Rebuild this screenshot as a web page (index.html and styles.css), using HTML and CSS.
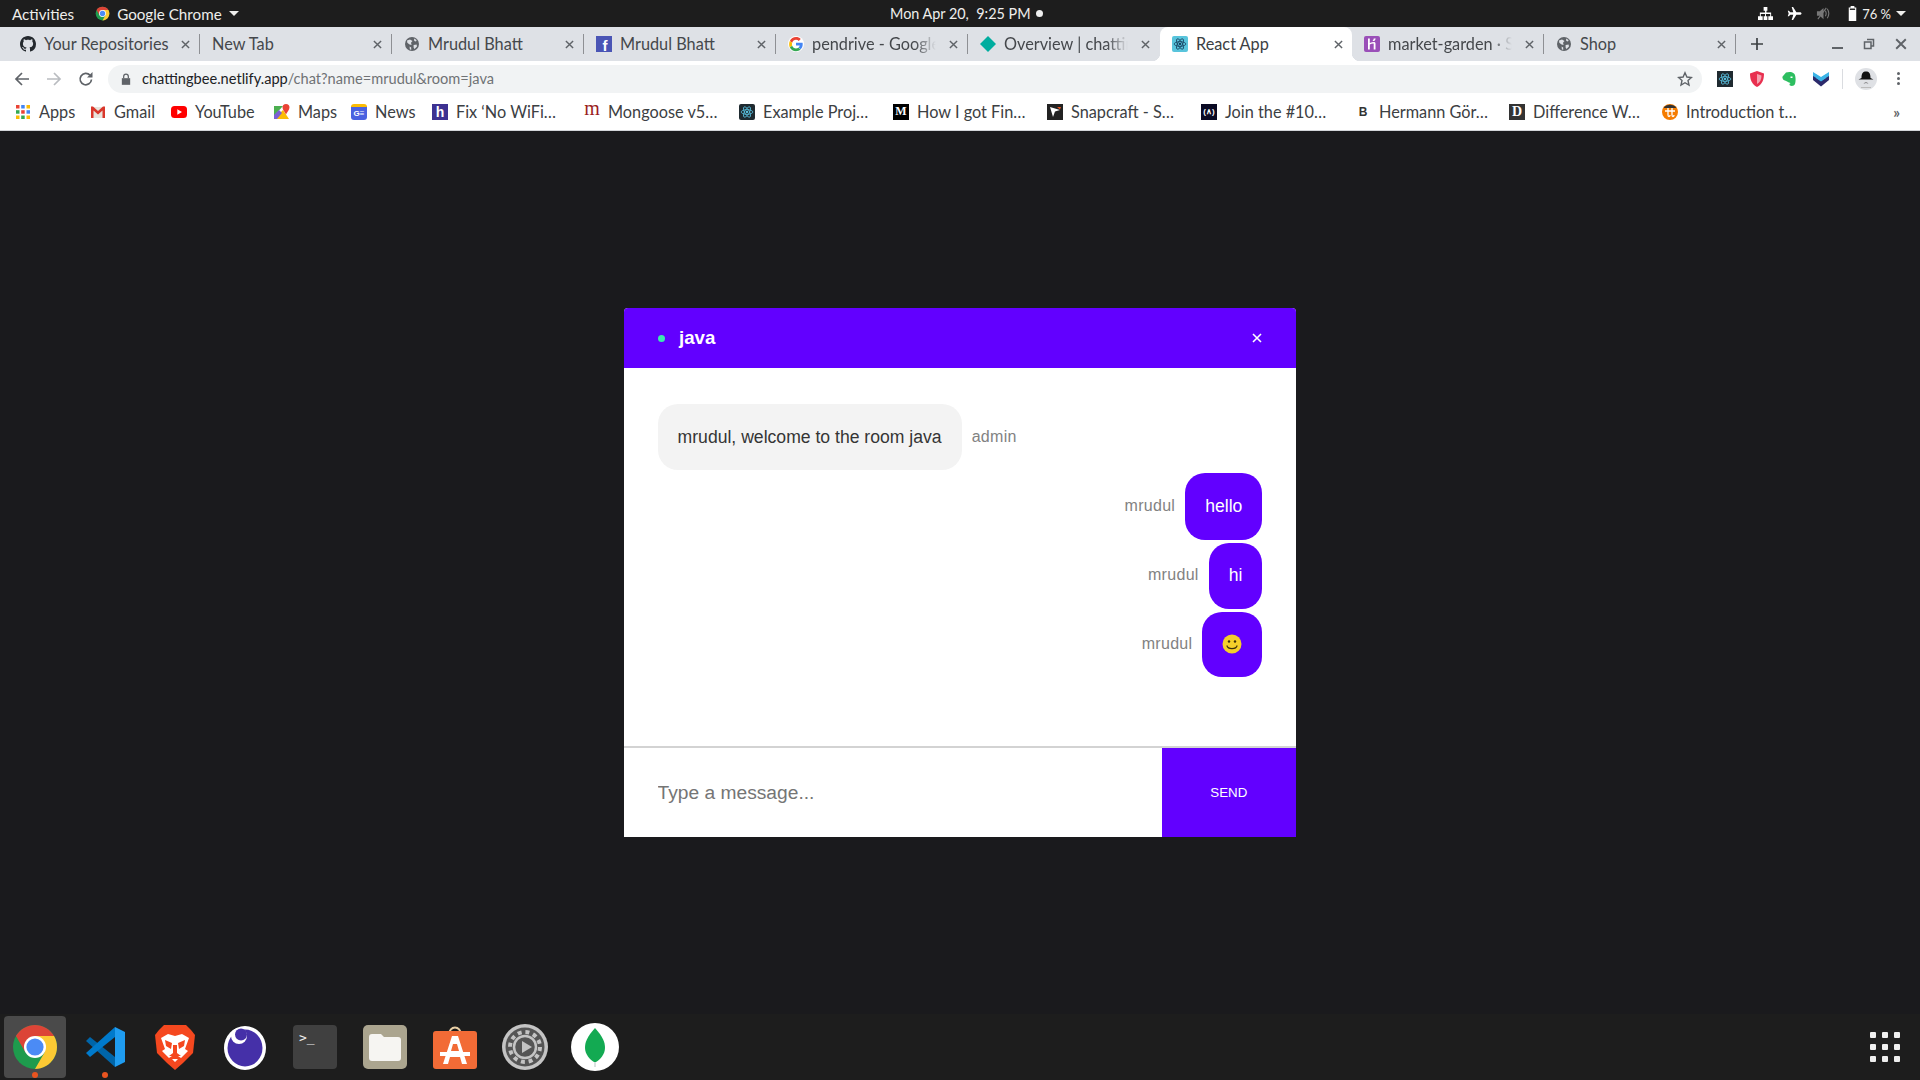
FILE: index.html
```html
<!DOCTYPE html>
<html lang="en">
<head>
<meta charset="utf-8">
<title>React App</title>
<link rel="stylesheet" href="styles.css">
</head>
<body>
<svg class="sprite" xmlns="http://www.w3.org/2000/svg">
  <symbol id="chrome" viewBox="0 0 48 48">
    <circle cx="24" cy="24" r="22" fill="#1e9b4d"/>
    <path d="M4.95 13A22 22 0 0 1 43.05 13H24L14.47 29.5Z" fill="#dc4437"/>
    <path d="M43.05 13A22 22 0 0 1 24 46L33.53 29.5 24 13Z" fill="#fcc934"/>
    <circle cx="24" cy="24" r="11" fill="#fff"/>
    <circle cx="24" cy="24" r="8.6" fill="#4b8bf5"/>
  </symbol>
  <symbol id="github" viewBox="0 0 16 16">
    <path fill="#24292e" d="M8 0C3.58 0 0 3.58 0 8c0 3.54 2.29 6.53 5.47 7.59.4.07.55-.17.55-.38 0-.19-.01-.82-.01-1.49-2.01.37-2.53-.49-2.69-.94-.09-.23-.48-.94-.82-1.13-.28-.15-.68-.52-.01-.53.63-.01 1.08.58 1.23.82.72 1.21 1.87.87 2.33.66.07-.52.28-.87.51-1.07-1.78-.2-3.64-.89-3.64-3.95 0-.87.31-1.59.82-2.15-.08-.2-.36-1.02.08-2.12 0 0 .67-.21 2.2.82.64-.18 1.32-.27 2-.27.68 0 1.36.09 2 .27 1.53-1.04 2.2-.82 2.2-.82.44 1.1.16 1.92.08 2.12.51.56.82 1.27.82 2.15 0 3.07-1.87 3.75-3.65 3.95.29.25.54.73.54 1.48 0 1.07-.01 1.93-.01 2.2 0 .21.15.46.55.38A8.013 8.013 0 0016 8c0-4.42-3.58-8-8-8z"/>
  </symbol>
  <symbol id="globe" viewBox="0 0 16 16">
    <circle cx="8" cy="8" r="7" fill="#5f6368"/>
    <path fill="#dee1e6" d="M3 4.5 6 3.5 8.5 5 7 6.8 7.6 9 5.6 8.6 3.3 6.8ZM10 2.6 12.6 4 12 5.6 10.3 5ZM9.6 9 12.6 8.6 13 10.6 10.5 13 9.6 11.5ZM5.6 10.5 7.2 11.5 7.2 14 5.8 13.2Z"/>
  </symbol>
  <symbol id="google" viewBox="0 0 48 48">
    <circle cx="24" cy="24" r="24" fill="#fff"/>
    <path fill="#ea4335" d="M24 11.5c3.2 0 6 1.1 8.2 3.2l6-6C34.500 5.300 29.700 3.300 24 3.300 15.900 3.300 8.900 8 5.500 14.800l7 5.400C14.200 15.100 18.700 11.500 24 11.500z"/>
    <path fill="#4285f4" d="M44.100 24.500c0-1.500-.1-2.900-.4-4.200H24v8h11.300c-.5 2.600-2 4.800-4.200 6.300l6.800 5.300c4-3.700 6.200-9.100 6.200-15.400z"/>
    <path fill="#fbbc05" d="M12.500 28.800c-.4-1.300-.7-2.700-.7-4.100s.3-2.800.7-4.100l-7-5.400C4 18 3.300 21.200 3.300 24.700s.7 6.700 2.200 9.500l7-5.400z"/>
    <path fill="#34a853" d="M24 45.700c5.600 0 10.300-1.800 13.900-5.100l-6.800-5.300c-1.900 1.300-4.300 2-7.100 2-5.300 0-9.800-3.600-11.500-8.400l-7 5.400C8.900 41 15.900 45.700 24 45.700z"/>
  </symbol>
  <symbol id="atom" viewBox="0 0 24 24">
    <g fill="none" stroke="currentColor" stroke-width="1.3">
      <ellipse cx="12" cy="12" rx="10" ry="4"/>
      <ellipse cx="12" cy="12" rx="10" ry="4" transform="rotate(60 12 12)"/>
      <ellipse cx="12" cy="12" rx="10" ry="4" transform="rotate(120 12 12)"/>
    </g>
    <circle cx="12" cy="12" r="2" fill="currentColor"/>
  </symbol>
  <symbol id="close" viewBox="0 0 10 10">
    <path d="M1 1 9 9M9 1 1 9" fill="none" stroke="currentColor" stroke-width="1.6"/>
  </symbol>
</svg>

<header class="sysbar">
  <div class="sys-left">
    <span>Activities</span>
    <span class="sys-app"><svg class="i15"><use href="#chrome"/></svg>Google Chrome<i class="caret"></i></span>
  </div>
  <div class="sys-clock"><span>Mon Apr 20,&nbsp; 9:25 PM</span><i class="sys-dot"></i></div>
  <div class="sys-right">
    <svg class="i15" viewBox="0 0 16 16"><path fill="#fff" d="M6 1h4v4H9v2h5v4h2v4h-5v-4h2V8.500H8.500V11H10v4H6v-4h1.500V8.500H3V11h2v4H0v-4h2V7h5.500V5H6Z"/></svg>
    <svg class="i15" viewBox="0 0 16 16"><path fill="#fff" d="M15.500 8c0-.8-1-1.300-2-1.300H10L6.500 1H5l1.700 5.700H3.500L2 5H.8l1 3-1 3H2l1.500-1.700h3.200L5 15h1.500L10 9.300h3.500c1 0 2-.5 2-1.300Z"/></svg>
    <svg class="i15" viewBox="0 0 16 16"><path fill="#777" d="M1 5.500h3L8 2v12L4 10.500H1Z"/><path fill="none" stroke="#777" stroke-width="1.200" d="M10 5c1 1.800 1 4.200 0 6M12 3c2 3 2 7 0 10M2 14 11 2"/></svg>
    <svg class="i15" viewBox="0 0 16 16"><path fill="#fff" d="M6 0h4v1.500h2V16H4V1.500h2Z"/><path fill="#1d1d1d" d="M5.200 2.700h5.600v1.500H5.200Z"/></svg>
    <span class="sys-batt">76 %</span>
    <i class="caret"></i>
  </div>
</header>

<nav class="tabstrip">
  <div class="tab"><svg class="i16"><use href="#github"/></svg><span class="tab-title">Your Repositories</span><svg class="tab-x"><use href="#close"/></svg><i class="tab-sep"></i></div>
  <div class="tab"><span class="tab-title">New Tab</span><svg class="tab-x"><use href="#close"/></svg><i class="tab-sep"></i></div>
  <div class="tab"><svg class="i16"><use href="#globe"/></svg><span class="tab-title">Mrudul Bhatt</span><svg class="tab-x"><use href="#close"/></svg><i class="tab-sep"></i></div>
  <div class="tab"><span class="fav fav-fb">f</span><span class="tab-title">Mrudul Bhatt</span><svg class="tab-x"><use href="#close"/></svg><i class="tab-sep"></i></div>
  <div class="tab"><svg class="i16"><use href="#google"/></svg><span class="tab-title tab-fade">pendrive - Google</span><svg class="tab-x"><use href="#close"/></svg><i class="tab-sep"></i></div>
  <div class="tab"><svg class="i16" viewBox="0 0 16 16"><path fill="#00ad9f" d="M8 0 16 8 8 16 0 8Z"/></svg><span class="tab-title tab-fade">Overview | chattin</span><svg class="tab-x"><use href="#close"/></svg><i class="tab-sep tab-sep-off"></i></div>
  <div class="tab tab-active"><span class="fav fav-react"><svg class="i14"><use href="#atom"/></svg></span><span class="tab-title">React App</span><svg class="tab-x"><use href="#close"/></svg></div>
  <div class="tab"><svg class="i16" viewBox="0 0 16 16"><rect width="16" height="16" rx="2" fill="#9a4fb8"/><path fill="#fff" d="M4 2.500h1.800V7c1.500-.7 3-1 4.200-1 .8 0 1.500.5 1.500 1.500v6H9.700V8c0-.4-.2-.5-.6-.5-1 0-2.300.4-3.300 1v5H4ZM9.800 2.500h1.900c-.1 1-.6 1.800-1.400 2.600H8.500c.7-.8 1.200-1.700 1.300-2.600Z"/></svg><span class="tab-title tab-fade">market-garden · S</span><svg class="tab-x"><use href="#close"/></svg><i class="tab-sep"></i></div>
  <div class="tab"><svg class="i16"><use href="#globe"/></svg><span class="tab-title">Shop</span><svg class="tab-x"><use href="#close"/></svg><i class="tab-sep"></i></div>
  <div class="tab-new"><svg class="i14" viewBox="0 0 14 14"><path d="M7 1V13M1 7H13" stroke="#3c4043" stroke-width="1.700"/></svg></div>
  <div class="winctl">
    <i class="win-min"></i>
    <svg class="i12" viewBox="0 0 12 12"><path fill="none" stroke="#5f6368" stroke-width="1.500" d="M4 1.500h6.500V8H8M1.500 4H8v6.500H1.500Z"/></svg>
    <svg class="i12"><use class="win-x" href="#close"/></svg>
  </div>
</nav>

<div class="toolbar">
  <svg class="tool" viewBox="0 0 16 16"><path fill="none" stroke="#5f6368" stroke-width="1.700" d="M15 8H2M8 2 2 8l6 6"/></svg>
  <svg class="tool" viewBox="0 0 16 16"><path fill="none" stroke="#b9bcc0" stroke-width="1.700" d="M1 8h13M8 2l6 6-6 6"/></svg>
  <svg class="tool" viewBox="0 0 16 16"><path fill="none" stroke="#5f6368" stroke-width="1.700" d="M13.500 8.500A5.700 5.700 0 1 1 12 4.200"/><path fill="#5f6368" d="M14.500 1v5.500H9Z"/></svg>
  <div class="omnibox">
    <svg class="lock" viewBox="0 0 12 14"><path fill="#5f6368" d="M1 6h10v8H1Z"/><path fill="none" stroke="#5f6368" stroke-width="1.500" d="M3.200 6V4a2.800 2.800 0 0 1 5.600 0v2"/></svg>
    <span class="url"><b>chattingbee.netlify.app</b>/chat?name=mrudul&amp;room=java</span>
    <svg class="star" viewBox="0 0 16 16"><path fill="none" stroke="#5f6368" stroke-width="1.400" d="M8 1.800 9.900 6l4.500.5-3.400 3 1 4.500L8 11.700 4 14l1-4.500-3.400-3L6.100 6Z"/></svg>
  </div>
  <div class="exts">
    <span class="ext ext-react"><svg class="i14"><use href="#atom"/></svg></span>
    <svg class="ext" viewBox="0 0 16 16"><path fill="#e8304f" d="M8 0 15 2.500C15 9 13 13.500 8 16 3 13.500 1 9 1 2.500Z"/><path fill="#fff" opacity=".55" d="M8 3 12.500 4.500C12.500 8.500 11 11.500 8 13Z"/></svg>
    <svg class="ext" viewBox="0 0 16 16"><path fill="#2dbe60" d="M5 1.500C8 .5 12 .8 13.500 3c1.200 2 1.500 7 .5 10-.6 2-3.500 2.500-5 1.500-.8-.6-.7-2 .6-2.200-.6-.7-2.500-1-3.500-1.800C4 9.500 2 9.300 1.500 7 1.300 6 1.500 5.300 2.500 4.500Z"/><path fill="#fff" d="M9.500 5.500h2v1.500h-2Z"/></svg>
    <svg class="ext" viewBox="0 0 16 16"><path fill="#3cb4e7" d="M0 1 8 6 16 1V8L8 13 0 8Z"/><path fill="#2c2a6b" d="M0 5 8 10 16 5V9L8 15.500 0 9Z"/><path fill="#3cb4e7" d="M3 3.500 8 6.500 13 3.500V7L8 10.500 3 7Z"/></svg>
    <i class="ext-sep"></i>
    <svg class="avatar" viewBox="0 0 22 22"><circle cx="11" cy="11" r="11" fill="#dfe1e5"/><path fill="#111" d="M6.500 10C6.500 5 8 3.500 11 3.500S15.500 5 15.500 10L18.500 11.500H3.500Z"/><path fill="#333" d="M8.500 15.500c1.500-1.300 3.500-1.300 5 0l-2.500-.4Z"/><path fill="#bbb" d="M6 19h10v1H6Z"/></svg>
    <span class="kebab"><i></i><i></i><i></i></span>
  </div>
</div>

<div class="bookmarks">
  <a class="bm"><svg class="i16" viewBox="0 0 16 16"><g><rect x="1" y="1" width="3.500" height="3.500" fill="#ea4335"/><rect x="6.200" y="1" width="3.500" height="3.500" fill="#4285f4"/><rect x="11.500" y="1" width="3.500" height="3.500" fill="#fbbc05"/><rect x="1" y="6.200" width="3.500" height="3.500" fill="#34a853"/><rect x="6.200" y="6.200" width="3.500" height="3.500" fill="#ea4335"/><rect x="11.500" y="6.200" width="3.500" height="3.500" fill="#4285f4"/><rect x="1" y="11.500" width="3.500" height="3.500" fill="#fbbc05"/><rect x="6.200" y="11.500" width="3.500" height="3.500" fill="#34a853"/><rect x="11.500" y="11.500" width="3.500" height="3.500" fill="#fbbc05"/></g></svg>Apps</a>
  <a class="bm"><svg class="i16" viewBox="0 0 16 16"><path fill="#e8e4dc" d="M1 3h14v11H1Z"/><path fill="#d9372b" d="M1 2.500 3 2.500 8 7 13 2.500H15V14H12.500V6.500L8 10.500 3.500 6.500V14H1Z"/></svg>Gmail</a>
  <a class="bm"><svg class="i16" viewBox="0 0 16 16"><rect y="2" width="16" height="12" rx="3.500" fill="#f00"/><path fill="#fff" d="M6.300 5.300 11 8 6.300 10.700Z"/></svg>YouTube</a>
  <a class="bm"><svg class="i16" viewBox="0 0 16 16"><path fill="#4caf50" d="M0 2 9 2 0 12Z"/><path fill="#fbbc05" d="M0 15 9 6 15 15Z"/><path fill="#7c5fd3" d="M0 15 0 11 5 6 8 9 3 15Z"/><path fill="#ea4335" d="M12 0a3.500 3.500 0 0 1 3.500 3.500C15.500 6 13 8 12 10.500 11 8 8.500 6 8.500 3.500A3.500 3.500 0 0 1 12 0Z"/></svg>Maps</a>
  <a class="bm"><span class="fav fav-news">G≡</span>News</a>
  <a class="bm"><span class="fav fav-h">h</span>Fix ‘No WiFi…</a>
  <a class="bm"><span class="fav fav-m">m</span>Mongoose v5…</a>
  <a class="bm"><span class="fav fav-dark"><svg class="i14"><use href="#atom"/></svg></span>Example Proj…</a>
  <a class="bm"><span class="fav fav-medium">M</span>How I got Fin…</a>
  <a class="bm"><svg class="i16" viewBox="0 0 16 16"><rect width="16" height="16" fill="#222"/><path fill="#fff" d="M3 3 13 6 8 7.500 6 13Z"/><path fill="#e95420" d="M10 3 14 3 13 5.500Z"/></svg>Snapcraft - S…</a>
  <a class="bm"><span class="fav fav-join">(∧)</span>Join the #10…</a>
  <a class="bm"><span class="fav fav-b">B</span>Hermann Gör…</a>
  <a class="bm"><span class="fav fav-d">D</span>Difference W…</a>
  <a class="bm"><svg class="i16" viewBox="0 0 16 16"><circle cx="8" cy="8" r="8" fill="#f57c00"/><path fill="#333" d="M1.500 4A8 8 0 0 1 14.500 4Z"/><path fill="none" stroke="#fff" stroke-width="1.300" d="M6 4v7c0 2 2 2 2 0M10 4v7c0 2 2 2 2 0M3 7h10"/></svg>Introduction t…</a>
  <span class="bm-more">»</span>
</div>

<main class="stage">
  <section class="chat">
    <div class="chat-head">
      <div class="chat-room"><i class="online"></i><h3>java</h3></div>
      <svg class="chat-close"><use href="#close"/></svg>
    </div>
    <div class="messages">
      <div class="msg msg-start">
        <div class="bubble bubble-light"><p>mrudul, welcome to the room java</p></div>
        <p class="sender sender-after">admin</p>
      </div>
      <div class="msg msg-end">
        <p class="sender sender-before">mrudul</p>
        <div class="bubble bubble-blue"><p>hello</p></div>
      </div>
      <div class="msg msg-end">
        <p class="sender sender-before">mrudul</p>
        <div class="bubble bubble-blue"><p>hi</p></div>
      </div>
      <div class="msg msg-end">
        <p class="sender sender-before">mrudul</p>
        <div class="bubble bubble-blue"><p><svg class="smile" viewBox="0 0 20 20"><circle cx="10" cy="10" r="9.500" fill="#f4cf2a"/><circle cx="7" cy="7.500" r="1.200" fill="#3a2d0a"/><circle cx="13" cy="7.500" r="1.200" fill="#3a2d0a"/><path d="M4.800 11.500c1.200 4.200 9.200 4.200 10.400 0" fill="none" stroke="#3a2d0a" stroke-width="1.100"/></svg></p></div>
      </div>
    </div>
    <form class="composer">
      <input class="composer-input" type="text" placeholder="Type a message...">
      <button class="composer-send" type="button">Send</button>
    </form>
  </section>
</main>

<footer class="dock">
  <div class="dock-item dock-active"><svg class="dock-ico"><use href="#chrome"/></svg><i class="run"></i></div>
  <div class="dock-item"><svg class="dock-ico" viewBox="0 0 48 48"><path fill="#0065a9" d="M5 18 9 14 34 34V44Z"/><path fill="#007acc" d="M34 4V14L9 34 5 30Z"/><path fill="#1f9cf0" d="M34 4 44 9V39L34 44Z"/></svg><i class="run"></i></div>
  <div class="dock-item"><svg class="dock-ico" viewBox="0 0 48 48"><path fill="#f5481f" d="M13 2H35L40 7 44 12 42 30 32 40 24 47 16 40 6 30 4 12 8 7Z"/><path fill="#fff" d="M10 15 17 11 24 13 31 11 38 15 34 26 37 28 30 35 27 33H21L18 35 11 28 14 26ZM21 36H27L24 39Z"/><path fill="#f5481f" d="M14 17 21 20 20 26 15 23ZM34 17 27 20 28 26 33 23ZM22 22H26L26 30 30 33H18L22 30Z"/></svg></div>
  <div class="dock-item"><svg class="dock-ico" viewBox="0 0 48 48"><ellipse cx="24" cy="25" rx="21" ry="22" fill="#fff"/><ellipse cx="24" cy="25" rx="17.500" ry="18.500" fill="#4530a8"/><circle cx="18" cy="13" r="8" fill="#fff"/><circle cx="20" cy="11.500" r="6" fill="#4530a8"/></svg></div>
  <div class="dock-item"><div class="term"><span>&gt;_</span></div></div>
  <div class="dock-item"><svg class="dock-ico" viewBox="0 0 48 48"><rect x="2" y="2" width="44" height="44" rx="5" fill="#aba58f"/><path fill="#f6f5f2" d="M8 14a3 3 0 0 1 3-3h9l3 3h14a3 3 0 0 1 3 3v18a3 3 0 0 1-3 3H11a3 3 0 0 1-3-3Z"/></svg></div>
  <div class="dock-item"><svg class="dock-ico" viewBox="0 0 48 48"><path fill="none" stroke="#e9cfa5" stroke-width="2" d="M18 12C18 2 30 2 30 12"/><rect x="2" y="8" width="44" height="38" rx="3" fill="#f26b36"/><path fill="#fff" d="M21 13H27L36 41H31L29 34H19L17 41H12ZM22 21 20 28H28L26 21Z"/><path fill="#fff" d="M9 29H39V33H9Z"/></svg></div>
  <div class="dock-item"><svg class="dock-ico" viewBox="0 0 48 48"><circle cx="24" cy="24" r="23" fill="#c4c4c4"/><circle cx="24" cy="24" r="19.500" fill="#555"/><circle cx="24" cy="24" r="15" fill="none" stroke="#c4c4c4" stroke-width="4" stroke-dasharray="4 3.850"/><circle cx="24" cy="24" r="11" fill="#555" stroke="#c4c4c4" stroke-width="2.500"/><path fill="#c4c4c4" d="M21 18 31 24 21 30Z"/></svg></div>
  <div class="dock-item"><svg class="dock-ico" viewBox="0 0 48 48"><circle cx="24" cy="24" r="24" fill="#fff"/><path fill="#13aa52" d="M24 5C32 14 34 19 34 25S29 37 25 39H23C19 37 14 31 14 25S16 14 24 5Z"/><path fill="#b8c4c2" d="M23.500 39h1v5h-1Z"/></svg></div>
  <div class="dock-grid">
    <i></i><i></i><i></i><i></i><i></i><i></i><i></i><i></i><i></i>
  </div>
</footer>
</body>
</html>
```

FILE: styles.css
```css
* { box-sizing: border-box; }
html, body { margin: 0; height: 100%; }
body {
  display: flex;
  flex-direction: column;
  height: 100vh;
  overflow: hidden;
  background: #1a1a1d;
  font-family: "Lato", "Noto Sans", sans-serif;
  font-size: 16.3px;
}
i { display: block; }
svg { display: block; flex: none; }
.sprite { display: none; }
.i12 { width: 12px; height: 12px; }
.i14 { width: 14px; height: 14px; }
.i15 { width: 15px; height: 15px; }
.i16 { width: 16px; height: 16px; }

/* GNOME top bar */
.sysbar {
  flex: none;
  height: 27px;
  display: grid;
  grid-template-columns: 890px auto 1fr;
  align-items: center;
  background: #1d1d1d;
  color: #eeeeec;
  font-size: 15.2px;
}
.sys-left { display: flex; align-items: center; gap: 21px; padding-left: 12px; }
.sys-app { display: flex; align-items: center; gap: 7px; }
.caret {
  width: 0; height: 0;
  border-left: 5px solid transparent;
  border-right: 5px solid transparent;
  border-top: 5px solid #eeeeec;
}
.sys-clock { display: flex; align-items: center; gap: 5px; font-size: 14.4px; }
.sys-dot { width: 7px; height: 7px; border-radius: 50%; background: #eee; }
.sys-right { display: flex; align-items: center; justify-content: flex-end; gap: 14px; padding-right: 14px; }
.sys-batt { margin-left: -12px; margin-right: -9px; font-size: 13px; }

/* Tabs */
.tabstrip {
  flex: none;
  height: 34px;
  display: flex;
  padding-left: 8px;
  background: #dee1e6;
}
.tab {
  position: relative;
  flex: none;
  width: 192px;
  display: flex;
  align-items: center;
  gap: 8px;
  padding-left: 12px;
  color: #45484c;
}
.tab-title {
  flex: 1;
  min-width: 0;
  margin-top: -1px;
  white-space: nowrap;
}
.tab-fade {
  -webkit-mask-image: linear-gradient(90deg, #000 80%, transparent 96%);
  mask-image: linear-gradient(90deg, #000 80%, transparent 96%);
}
.tab-x { width: 9px; height: 9px; color: #5f6368; margin-right: 3px; }
.tab-sep { width: 1px; height: 20px; background: #8e9094; margin-left: -2px; }
.tab-sep-off { background: transparent; }
.tab-active {
  background: #fff;
  border-radius: 8px 8px 0 0;
  color: #3c4043;
}
.tab-active .tab-x { margin-right: 9px; }
.tab-active::before,
.tab-active::after {
  content: "";
  position: absolute;
  bottom: 0;
  width: 8px;
  height: 8px;
}
.tab-active::before { left: -8px; background: radial-gradient(circle at 0 0, transparent 8px, #fff 8.5px); }
.tab-active::after { right: -8px; background: radial-gradient(circle at 100% 0, transparent 8px, #fff 8.5px); }
.tab-new { width: 38px; display: flex; align-items: center; justify-content: center; margin-left: 2px; }
.winctl { flex: 1; display: flex; align-items: center; justify-content: flex-end; gap: 20px; padding-right: 13px; }
.win-min { width: 11px; height: 2px; background: #5f6368; margin-top: 8px; }
.win-x { color: #5f6368; }

.fav {
  flex: none;
  width: 16px;
  height: 16px;
  display: flex;
  align-items: center;
  justify-content: center;
  line-height: 1;
}
.fav-fb { background: #4a55b5; color: #fff; font: bold 15px "Liberation Sans", sans-serif; padding-top: 3px; padding-left: 2px; }
.fav-react { background: #58c4dc; color: #143a5a; border-radius: 2px; }
.fav-news { background: #4a62e0; color: #fff; border-radius: 3px; border-top: 3px solid #fbbc05; font: bold 8px "Liberation Sans", sans-serif; }
.fav-h { background: #3d3191; color: #fff; font: bold 14px "Liberation Sans", sans-serif; }
.fav-m { background: transparent; color: #9a1c1c; font: 20px "Liberation Serif", serif; padding-bottom: 6px; }
.fav-dark { background: #1f2a30; color: #5cc8e8; border-radius: 2px; }
.fav-medium { background: #000; color: #fff; font: bold 12px "Liberation Serif", serif; }
.fav-join { background: #0a0a23; color: #fff; font: bold 8px "Liberation Sans", sans-serif; }
.fav-b { background: transparent; color: #333; font: bold 12px "Liberation Sans", sans-serif; width: 8px; margin-right: 4px; }
.fav-d { background: #333; color: #fff; font: bold 14px "Liberation Serif", serif; }

/* Toolbar */
.toolbar {
  flex: none;
  height: 32px;
  display: flex;
  align-items: flex-end;
  gap: 16px;
  padding-left: 14px;
  background: #fff;
}
.tool { width: 16px; height: 16px; margin-bottom: 6px; }
.omnibox {
  flex: none;
  width: 1594px;
  height: 28px;
  margin-left: -2px;
  display: flex;
  align-items: center;
  gap: 11px;
  padding: 0 9px 0 13px;
  background: #f1f3f4;
  border-radius: 14px;
  color: #6f7275;
  font-size: 14.6px;
}
.lock { width: 10px; height: 12px; }
.url { flex: 1; white-space: nowrap; padding-bottom: 1px; }
.url b { font-weight: 400; color: #202124; }
.star { width: 16px; height: 16px; }
.exts { display: flex; align-items: center; gap: 16px; align-self: stretch; margin-left: -1px; padding-top: 3px; }
.ext { width: 16px; height: 16px; flex: none; }
.ext-react { display: flex; align-items: center; justify-content: center; background: #1f2a30; color: #5cc8e8; }
.ext-sep { width: 1px; height: 20px; background: #dadce0; margin: 0 -3px 0 -3px; }
.avatar { width: 22px; height: 22px; margin-left: -1px; }
.kebab { display: flex; flex-direction: column; gap: 2px; margin-left: 4px; }
.kebab i { width: 3px; height: 3px; border-radius: 50%; background: #5f6368; }

/* Bookmarks */
.bookmarks {
  flex: none;
  height: 38px;
  display: grid;
  grid-template-columns: 75px 81px 103px 77px 81px 152px 155px 154px 154px 154px 158px 150px 153px 1fr auto;
  align-items: center;
  padding: 0 20px 0 15px;
  background: #fff;
  border-bottom: 1px solid #d3d5d9;
  color: #3c4043;
}
.bm { display: flex; align-items: center; gap: 8px; white-space: nowrap; }
.bm-more { color: #5f6368; font-size: 15px; font-weight: 700; }

/* Chat */
.stage {
  flex: 1;
  min-height: 0;
  display: flex;
  align-items: center;
  justify-content: center;
}
.chat {
  width: 672px;
  height: 529px;
  display: flex;
  flex-direction: column;
  background: #fff;
  border-radius: 4px 4px 0 0;
  font-family: "Liberation Sans", Arial, sans-serif;
  font-size: 16px;
}
.chat-head {
  flex: none;
  height: 60px;
  display: flex;
  align-items: center;
  justify-content: space-between;
  padding: 0 34px;
  background: #6200ff;
  border-radius: 4px 4px 0 0;
  color: #fff;
}
.chat-room { display: flex; align-items: center; gap: 14px; }
.online { width: 7px; height: 7px; border-radius: 50%; background: #3be8b0; }
.chat-room h3 { margin: 0; font-size: 18.72px; font-weight: 700; }
.chat-close { width: 10px; height: 10px; color: #fff; }
.messages { flex: 1; min-height: 0; padding: 33.2px 0; overflow: hidden; }
.msg { display: flex; align-items: stretch; padding: 0 33.6px; margin-top: 3px; }
.msg-end { justify-content: flex-end; }
.bubble { display: inline-block; max-width: 80%; padding: 5px 20px; border-radius: 20px; }
.bubble p { margin: 17.6px 0; font-size: 17.6px; line-height: 21px; }
.bubble-light { background: #f3f3f3; color: #353535; }
.bubble-blue { background: #6200ff; color: #fff; }
.sender { display: flex; align-items: center; margin: 0; color: #828282; letter-spacing: 0.3px; padding-bottom: 1px; }
.sender-after { padding-left: 10px; }
.sender-before { padding-right: 10px; }
.smile { width: 20px; height: 20px; margin-top: 1px; }
.composer { flex: none; height: 91px; display: flex; border-top: 2px solid #d3d3d3; }
.composer-input {
  flex: 1;
  min-width: 0;
  padding: 0 33.6px;
  border: 0;
  outline: 0;
  background: #fff;
  font-family: "Liberation Sans", Arial, sans-serif;
  font-size: 19.2px;
}
.composer-send {
  flex: none;
  width: 134.4px;
  border: 0;
  background: #6200ff;
  color: #fff;
  font-family: "Liberation Sans", Arial, sans-serif;
  font-size: 13.33px;
  text-transform: uppercase;
}

/* Dock */
.dock {
  flex: none;
  height: 66px;
  display: flex;
  align-items: center;
  gap: 8px;
  padding-left: 4px;
  background: #1d1d1d;
}
.dock-item {
  position: relative;
  width: 62px;
  height: 62px;
  display: flex;
  align-items: center;
  justify-content: center;
  border-radius: 4px;
}
.dock-active { background: #4a4a4a; }
.dock-ico { width: 48px; height: 48px; }
.run {
  position: absolute;
  bottom: 0;
  left: 28px;
  width: 6px;
  height: 6px;
  border-radius: 50%;
  background: #e95420;
}
.term {
  width: 44px;
  height: 44px;
  padding: 6px 0 0 6px;
  border-radius: 4px;
  background: #404040;
  color: #eee;
  font: 13px/1 "DejaVu Sans Mono", monospace;
}
.dock-grid {
  margin-left: auto;
  margin-right: 20px;
  display: grid;
  grid-template-columns: repeat(3, 6px);
  grid-auto-rows: 6px;
  gap: 6px;
}
.dock-grid i { border-radius: 1px; background: #eee; }
```
